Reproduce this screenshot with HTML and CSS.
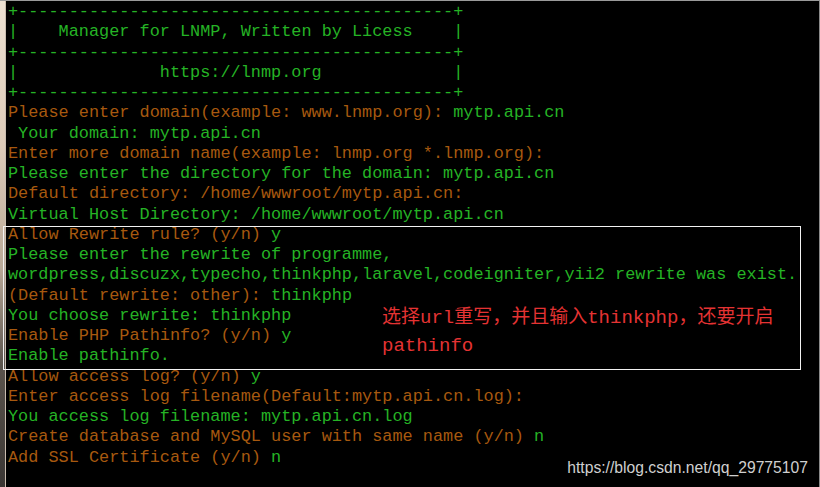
FILE: index.html
```html
<!DOCTYPE html>
<html lang="en">
<head>
<meta charset="utf-8">
<title>LNMP vhost</title>
<link rel="stylesheet" href="styles.css">
</head>
<body>
<div class="screen">
  <div class="edge"></div>
  <div class="term">
    <div class="line g">+-------------------------------------------+</div>
    <div class="line g">|    Manager for LNMP, Written by Licess    |</div>
    <div class="line g">+-------------------------------------------+</div>
    <div class="line g">|              https://lnmp.org             |</div>
    <div class="line g">+-------------------------------------------+</div>
    <div class="line o">Please enter domain(example: www.lnmp.org): <span class="g">mytp.api.cn</span></div>
    <div class="line g"> Your domain: mytp.api.cn</div>
    <div class="line o">Enter more domain name(example: lnmp.org *.lnmp.org):</div>
    <div class="line g">Please enter the directory for the domain: mytp.api.cn</div>
    <div class="line o">Default directory: /home/wwwroot/mytp.api.cn:</div>
    <div class="line g">Virtual Host Directory: /home/wwwroot/mytp.api.cn</div>
    <div class="line o">Allow Rewrite rule? (y/n) <span class="g">y</span></div>
    <div class="line g">Please enter the rewrite of programme,</div>
    <div class="line g">wordpress,discuzx,typecho,thinkphp,laravel,codeigniter,yii2 rewrite was exist.</div>
    <div class="line o">(Default rewrite: other): <span class="g">thinkphp</span></div>
    <div class="line g">You choose rewrite: thinkphp</div>
    <div class="line o">Enable PHP Pathinfo? (y/n) <span class="g">y</span></div>
    <div class="line g">Enable pathinfo.</div>
    <div class="line o">Allow access log? (y/n) <span class="g">y</span></div>
    <div class="line o">Enter access log filename(Default:mytp.api.cn.log):</div>
    <div class="line g">You access log filename: mytp.api.cn.log</div>
    <div class="line o">Create database and MySQL user with same name (y/n) <span class="g">n</span></div>
    <div class="line o">Add SSL Certificate (y/n) <span class="g">n</span></div>
  </div>
  <div class="annot-box"></div>
  <div class="annot-text">选择url重写，并且输入thinkphp，还要开启<br>pathinfo</div>
  <div class="watermark">https://blog.csdn.net/qq_29775107</div>
</div>
</body>
</html>
```
FILE: styles.css
```css
html, body {
  margin: 0;
  padding: 0;
  background: #000;
  overflow: hidden;
}
.screen {
  position: relative;
  width: 819px;
  height: 486px;
  border-top: 1px solid #9a9a9a;
  border-right: 1px solid #8a8a8a;
  display: flex;
  background: #000;
}
.edge {
  width: 5px;
  flex: none;
  background: linear-gradient(180deg, #ece0d2 0%, #dccbb8 30%, #b9a998 55%, #5b544d 75%, #3a3633 100%);
  border-right: 1px solid #c9bcae;
}
.term {
  padding-left: 2px;
  padding-top: 1px;
  font-family: "Liberation Mono", "DejaVu Sans Mono", monospace;
  font-size: 16.88px;
  line-height: 20.25px;
}
.line {
  white-space: pre;
}
.g { color: #25b325; }
.o { color: #a7590f; }
.annot-box {
  position: absolute;
  left: 3px;
  top: 225px;
  width: 796px;
  height: 142px;
  border: 1px solid #f2f2f2;
}
.annot-text {
  position: absolute;
  left: 382px;
  top: 303px;
  font-family: "Liberation Mono", "Noto Sans CJK SC", monospace;
  font-size: 19px;
  line-height: 28px;
  color: #e43333;
}
.watermark {
  position: absolute;
  right: 11px;
  top: 458px;
  font-family: "Liberation Sans", Arial, sans-serif;
  font-size: 15.7px;
  color: #cfcfcf;
}
```
